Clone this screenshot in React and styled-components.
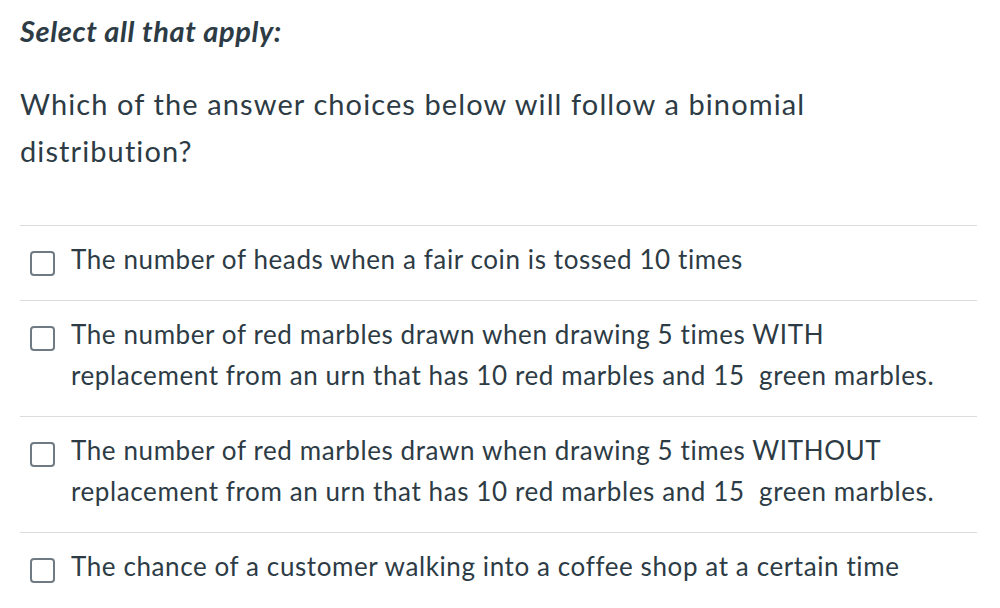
import styled, { createGlobalStyle } from "styled-components";

const GlobalStyle = createGlobalStyle`
  body {
    margin: 0;
    background: #ffffff;
    font-family: Lato, "Open Sans", sans-serif;
    color: #2d3b45;
    font-variant-ligatures: none;
  }
`;

const OPTIONS = [
  "The number of heads when a fair coin is tossed 10 times",
  "The number of red marbles drawn when drawing 5 times WITH replacement from an urn that has 10 red marbles and 15\u00a0 green marbles.",
  "The number of red marbles drawn when drawing 5 times WITHOUT replacement from an urn that has 10 red marbles and 15\u00a0 green marbles.",
  "The chance of a customer walking into a coffee shop at a certain time",
];

export default function App() {
  return (
    <>
      <GlobalStyle />
      <QuizStyled>
        <h2 className="instruction">Select all that apply:</h2>
        <p className="question">
          Which of the answer choices below will follow a binomial distribution?
        </p>
        <AnswerList>
          {OPTIONS.map((label) => (
            <AnswerRow key={label}>
              <Checkbox type="checkbox" />
              <span>{label}</span>
            </AnswerRow>
          ))}
        </AnswerList>
      </QuizStyled>
    </>
  );
}

const QuizStyled = styled.div`
  width: 957px;
  padding: 0 0 0 20px;

  .instruction {
    margin: 13px 0 0;
    font-size: 29px;
    font-weight: 700;
    font-style: italic;
    line-height: 36px;
    letter-spacing: 0.6px;
  }
  .question {
    margin: 31px 0 0;
    font-size: 29px;
    line-height: 47px;
    letter-spacing: 1.1px;
    width: 830px;
  }
`;

const AnswerList = styled.ul`
  list-style: none;
  margin: 51px 0 0;
  padding: 0;
`;

const AnswerRow = styled.li`
  display: flex;
  align-items: flex-start;
  gap: 16px;
  padding: 13px 0 20px 10px;
  border-top: 1px solid #dcdcdc;
  font-size: 26px;
  line-height: 41px;
  letter-spacing: 0.6px;
  span {
    max-width: 890px;
  }
`;

const Checkbox = styled.input`
  appearance: none;
  flex: none;
  width: 25px;
  height: 25px;
  margin: 12px 0 0;
  border: 2px solid #6f7b84;
  border-radius: 4px;
  background: #ffffff;
`;
